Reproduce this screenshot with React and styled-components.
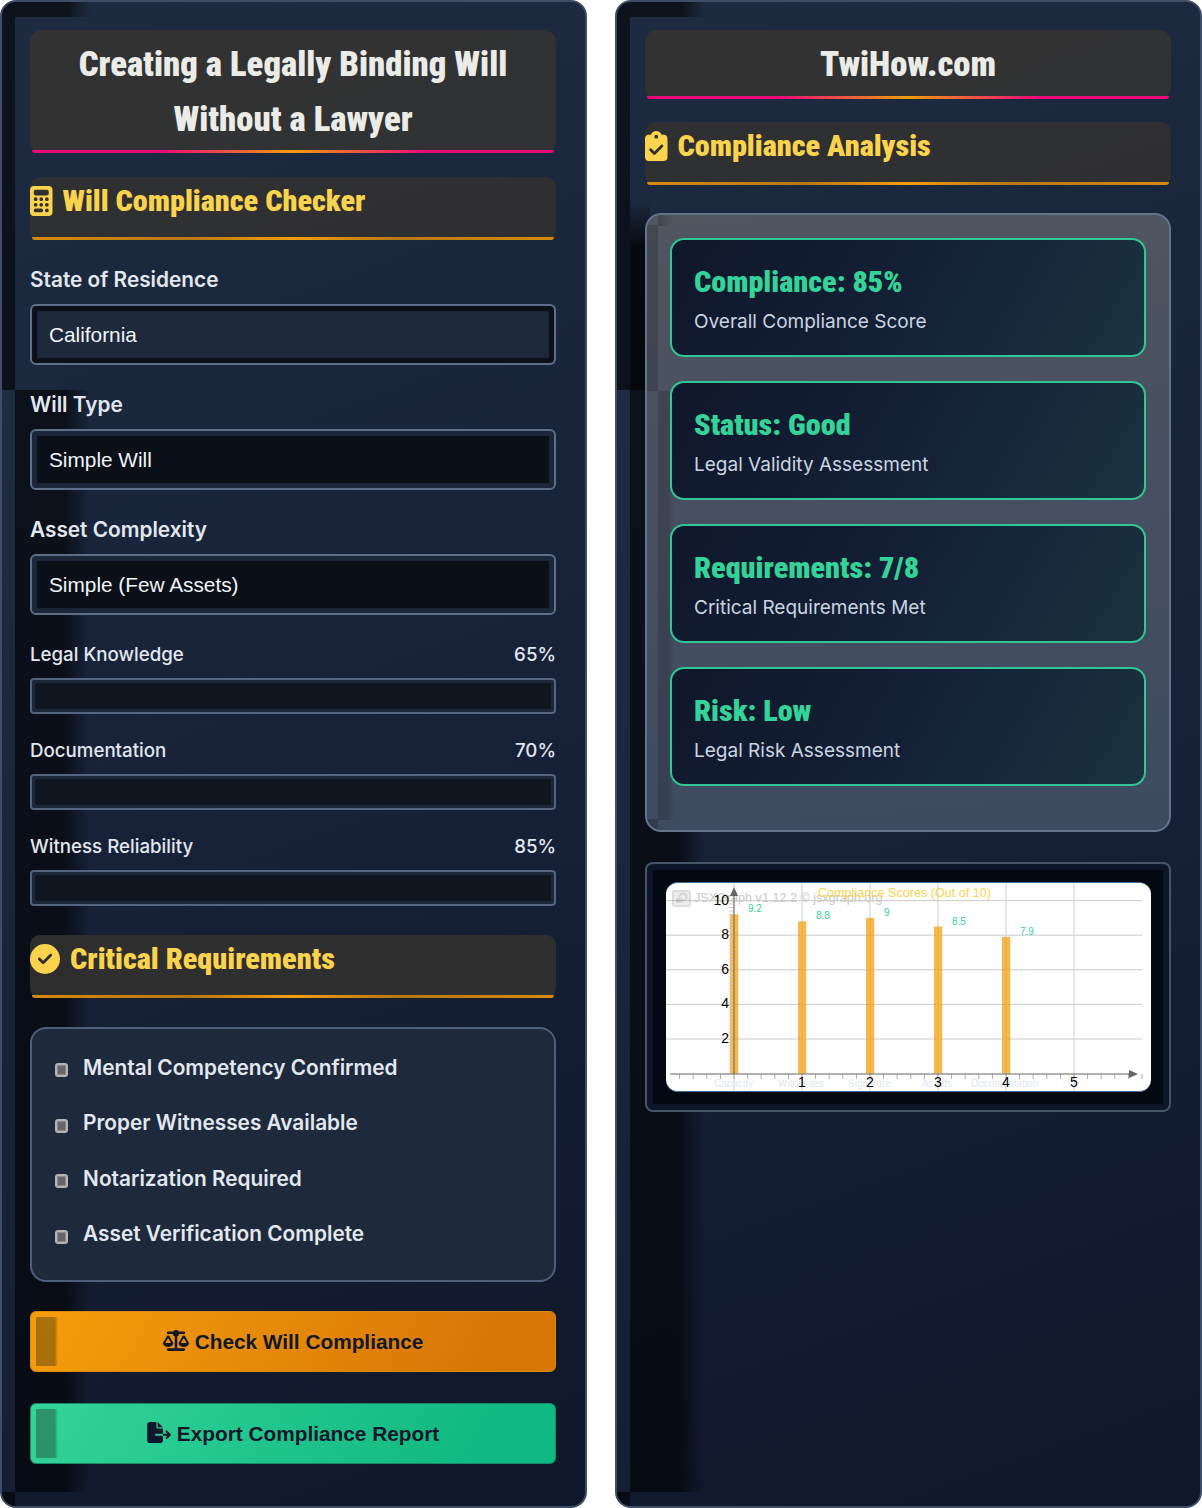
import React from "react";
import styled, { createGlobalStyle } from "styled-components";
import { FaCalculator, FaClipboardCheck, FaCircleCheck, FaScaleBalanced, FaFileExport } from "react-icons/fa6";

const Global = createGlobalStyle`
  html, body { margin: 0; padding: 0; background: #fff; }
  * { box-sizing: border-box; }
  body { font-family: Inter, "Liberation Sans", sans-serif; }
`;

const Page = styled.div`
  display: grid;
  grid-template-columns: 587px 587px;
  column-gap: 28px;
  width: 1202px;
  height: 1508px;
`;

const Panel = styled.section`
  position: relative;
  overflow: hidden;
  height: 1508px;
  padding: 28px 29px 28px 28px;
  border: 2px solid #3f4d66;
  border-radius: 16px;
  background: linear-gradient(160deg, #1e2b40 0%, #18233a 45%, #0f172a 100%);
`;

const Shade = styled.div`
  position: absolute;
  left: ${(p) => p.$l}px;
  top: ${(p) => p.$t}px;
  width: ${(p) => p.$w}px;
  height: ${(p) => p.$h}px;
  background: ${(p) => p.$bg};
  pointer-events: none;
`;

const Content = styled.div`
  position: relative;
  display: flex;
  flex-direction: column;
`;

const Title = styled.h1`
  position: relative;
  margin: 0 0 ${(p) => p.$mb}px;
  padding: 7px 0;
  border-radius: 12px;
  background: rgba(51, 51, 51, 0.97);
  color: #ebebe8;
  font-family: Roboto, sans-serif;
  font-stretch: 75%;
  font-size: 34.7px;
  font-weight: 900;
  line-height: 54.6px;
  text-align: center;
  &::after {
    content: "";
    position: absolute;
    left: 2px;
    right: 2px;
    bottom: 0;
    height: 3px;
    border-radius: 0 0 8px 8px;
    background: linear-gradient(90deg, #ec0a78 0%, #ec0a78 25%, #f59e0b 50%, #ec0a78 75%, #ec0a78 100%);
  }
`;

const SectionHead = styled.h2`
  position: relative;
  display: flex;
  align-items: center;
  gap: 10px;
  height: 63px;
  margin: 0 0 ${(p) => p.$mb}px;
  padding: 0 0 14px;
  border-radius: 10px;
  background: rgba(50, 49, 48, 0.9);
  color: #fcd34d;
  font-family: Roboto, sans-serif;
  font-stretch: 75%;
  font-size: 30.2px;
  font-weight: 900;
  line-height: 50px;
  svg { flex: none; width: ${(p) => p.$iconW}px; height: 30px; }
  &::after {
    content: "";
    position: absolute;
    left: 2px;
    right: 2px;
    bottom: 0;
    height: 3px;
    border-radius: 0 0 8px 8px;
    background: linear-gradient(90deg, #d98a0b 0%, #b9770f 30%, #f59e0b 50%, #b9770f 70%, #d98a0b 100%);
  }
`;

const Label = styled.label`
  display: block;
  height: 30px;
  margin-bottom: 9px;
  color: #e2e8f0;
  font-size: 20.8px;
  font-weight: 600;
  line-height: 30px;
`;

const SelectBox = styled.div`
  display: flex;
  align-items: center;
  height: 61px;
  margin-bottom: 25px;
  padding: 1px 0 0 17px;
  border: 2px solid #5f6f8a;
  border-radius: 6px;
  background: ${(p) => (p.$open ? "#1e293b" : "#0a0f18")};
  box-shadow: inset 0 0 1px 5px ${(p) => (p.$open ? "#0b1019" : "#1c273a")};
  color: #f1f5f9;
  font-family: "Liberation Sans", Arial, sans-serif;
  font-size: 20.8px;
`;

const SliderHead = styled.div`
  display: flex;
  justify-content: space-between;
  height: 30px;
  margin-bottom: 8px;
  color: #e2e8f0;
  font-size: 18.7px;
  font-weight: 500;
  line-height: 30px;
`;

const Track = styled.div`
  height: 36px;
  margin-bottom: ${(p) => p.$mb}px;
  border: 2px solid #56657f;
  border-radius: 4px;
  background: #10151f;
  box-shadow: inset 0 0 1px 3px #1c273a;
`;

const Checklist = styled.ul`
  height: 255px;
  margin: 0 0 29px;
  padding: 11px 0 0 22.6px;
  border: 2px solid #4f5f7a;
  border-radius: 16px;
  background: #1e293b;
  list-style: none;
`;

const CheckItem = styled.li`
  display: flex;
  align-items: center;
  height: 55.4px;
  color: #e2e8f0;
  font-size: 20.8px;
  font-weight: 600;
`;

const Bullet = styled.span`
  flex: none;
  width: 13px;
  height: 14px;
  margin: 6px 15.5px 0 0;
  border: 2px solid #b4b4b4;
  border-radius: 3px;
  background: #666;
  box-shadow: inset 0 0 0 1px #8a8a8a;
`;

const ActionButton = styled.button`
  position: relative;
  display: flex;
  align-items: center;
  justify-content: center;
  gap: 6px;
  width: 100%;
  height: 61px;
  margin: 0 0 ${(p) => p.$mb}px;
  padding: 2px 0 0;
  border: 1px solid ${(p) => (p.$green ? "#148a66" : "#d9890b")};
  border-radius: 6px;
  background: linear-gradient(120deg, ${(p) => (p.$green ? "#34d399, #10b981 85%" : "#f59e0b, #d97706 85%")});
  color: #0f172a;
  font-family: "Liberation Sans", Arial, sans-serif;
  font-size: 20.8px;
  font-weight: 700;
  svg { width: ${(p) => p.$iconW}px; height: 21px; margin-top: -3px; }
  &::before {
    content: "";
    position: absolute;
    left: 5px;
    top: 5px;
    bottom: 5px;
    width: 22px;
    background: linear-gradient(90deg, rgba(30, 30, 20, 0.35) 85%, rgba(30, 30, 20, 0));
  }
`;

const AnalysisBox = styled.div`
  position: relative;
  overflow: hidden;
  height: 618.6px;
  margin-bottom: 30px;
  padding: 23px 23px 22px;
  border: 2px solid #64748b;
  border-radius: 16px;
  background: linear-gradient(175deg, #505660 0%, #48505f 40%, #3d4a60 100%);
`;

const ResultCard = styled.article`
  position: relative;
  height: 119px;
  margin-bottom: 24px;
  padding: 22px 22px;
  border: 2px solid #2fc795;
  border-radius: 14px;
  background: linear-gradient(120deg, #0f172a 0%, #142036 50%, #1b3340 100%);
`;

const ResultTitle = styled.h3`
  margin: 0 0 5px;
  color: #34d399;
  font-family: Roboto, sans-serif;
  font-stretch: 75%;
  font-size: 30.2px;
  font-weight: 900;
  line-height: 40px;
`;

const ResultNote = styled.p`
  margin: 0;
  color: #cbd5e1;
  font-size: 19px;
  line-height: 30px;
`;

const ChartBox = styled.div`
  height: 250px;
  padding: 18px 19px;
  border: 2px solid #475569;
  border-radius: 8px;
  background: #040812;
  box-shadow: inset 0 0 1px 6px #0e1729;
`;

const ChartFrame = styled.div`
  width: 485px;
  height: 210px;
  overflow: hidden;
  border-radius: 12px;
  border-top: 1px solid #3b6f9f;
  border-bottom: 1px solid #3b6f9f;
  background: #fff;
  svg { display: block; }
`;

const sx = (v) => 68 + 68 * v;
const sy = (v) => 190.6 - 17.3 * v;
const bars = [
  { x: 0, v: 9.2, l: "9.2", c: "Capacity", cx: 48 },
  { x: 1, v: 8.8, l: "8.8", c: "Witnesses", cx: 112 },
  { x: 2, v: 9, l: "9", c: "Signature", cx: 182 },
  { x: 3, v: 8.5, l: "8.5", c: "Assets", cx: 256 },
  { x: 4, v: 7.9, l: "7.9", c: "Documentation", cx: 305 },
];

function Chart() {
  const font = '"Liberation Sans", Arial, sans-serif';
  const minorX = [];
  for (let i = -4; i < 34; i++) minorX.push(sx(i / 5) + 0);
  const minorY = [];
  for (let i = 1; i < 50; i++) minorY.push(sy(i / 5));
  return (
    <svg width="485" height="208" viewBox="0 0 485 208" fontFamily={font}>
      {[2, 4, 6, 8, 10].map((n) => (
        <line key={n} x1="0" x2="476" y1={sy(n)} y2={sy(n)} stroke="#cacaca" strokeWidth="1" />
      ))}
      {[0, 1, 2, 3, 4, 5].map((n) => (
        <line key={n} x1={sx(n)} x2={sx(n)} y1="0" y2="208" stroke="#d6d6d6" strokeWidth="1.2" />
      ))}
      <g opacity="0.25">
        <rect x="7" y="8" width="17" height="15" rx="2" fill="#bbb" stroke="#777" strokeWidth="2" />
        <circle cx="17" cy="14" r="3.5" fill="none" stroke="#555" strokeWidth="2" />
        <rect x="10" y="15" width="6" height="5" fill="#555" />
      </g>
      <text x="28" y="18.5" fontSize="12.6" fill="#c9c9c9">JSXGraph v1.12.2 © jsxgraph.org</text>
      {bars.map((b) => (
        <g key={b.x}>
          <rect x={sx(b.x) - 4} y={sy(b.v)} width="9" height={190.6 - sy(b.v)} fill="#f59e0b" opacity="0.22" />
          <rect x={sx(b.x) - 4} y={sy(b.v)} width="8" height={190.6 - sy(b.v)} fill="#f59e0b" opacity="0.65" />
          <text x={sx(b.x) + 14} y={sy(b.v) - 2} fontSize="10" fill="#34d399">{b.l}</text>
        </g>
      ))}
      {minorX.map((x) => (
        <line key={x} x1={x} x2={x} y1="191" y2="196" stroke="#aaa" strokeWidth="1" />
      ))}
      {minorY.map((y) => (
        <line key={y} x1={sx(0) - 5} x2={sx(0)} y1={y} y2={y} stroke="#d9c9a8" strokeWidth="1" />
      ))}
      <line x1="4" x2="470" y1="191" y2="191" stroke="#666" strokeWidth="1" />
      <line x1={sx(0)} x2={sx(0)} y1="10" y2="191" stroke="#666" strokeWidth="1" />
      <polygon points="463,187 472,191 463,195" fill="#666" />
      <polygon points={`${sx(0)},4 ${sx(0) - 4},13 ${sx(0) + 4},13`} fill="#666" />
      {[2, 4, 6, 8, 10].map((n) => (
        <text key={n} x={sx(0) - 5} y={sy(n) + 4} fontSize="14" textAnchor="end" fill="#000">{n}</text>
      ))}
      {bars.map((b) => (
        <text key={b.c} x={b.cx} y="204" fontSize="10" fill="#e2e8f0">{b.c}</text>
      ))}
      {[1, 2, 3, 4, 5].map((n) => (
        <text key={n} x={sx(n)} y="204" fontSize="14" textAnchor="middle" fill="#000">{n}</text>
      ))}
      <text x="152" y="14" fontSize="12.6" fill="#fcd34d">Compliance Scores (Out of 10)</text>
    </svg>
  );
}

const Shades = ({ right }) => (
  <>
    <Shade $l={0} $t={0} $w={13} $h={388} $bg="rgba(0,0,0,.55)" />
    <Shade $l={13} $t={0} $w={75} $h={15} $bg="linear-gradient(90deg, rgba(0,0,0,.55) 70%, rgba(0,0,0,0))" />
    <Shade $l={13} $t={388} $w={75} $h={1102} $bg="linear-gradient(90deg, rgba(0,0,0,.58) 0%, rgba(0,0,0,.58) 65%, rgba(0,0,0,0) 100%)" />
    <Shade $l={0} $t={388} $w={13} $h={1102} $bg="rgba(255,255,255,.02)" />
    <Shade $l={0} $t={1490} $w={13} $h={16} $bg="rgba(0,0,0,.55)" />
    {right && (
      <Shade $l={13} $t={200} $w={20} $h={188} $bg="linear-gradient(180deg, rgba(0,0,0,0), rgba(0,0,0,.8) 25%)" />
    )}
  </>
);

const selects = [
  ["State of Residence", "California", true],
  ["Will Type", "Simple Will", false],
  ["Asset Complexity", "Simple (Few Assets)", false],
];
const sliders = [
  ["Legal Knowledge", "65%"],
  ["Documentation", "70%"],
  ["Witness Reliability", "85%"],
];
const checks = ["Mental Competency Confirmed", "Proper Witnesses Available", "Notarization Required", "Asset Verification Complete"];
const results = [
  ["Compliance: 85%", "Overall Compliance Score"],
  ["Status: Good", "Legal Validity Assessment"],
  ["Requirements: 7/8", "Critical Requirements Met"],
  ["Risk: Low", "Legal Risk Assessment"],
];

export default function App() {
  return (
    <>
      <Global />
      <Page>
        <Panel>
          <Shades />
          <Content>
            <Title $mb={23.6}>Creating a Legally Binding Will<br />Without a Lawyer</Title>
            <SectionHead $mb={25} $iconW={22.5}><FaCalculator />Will Compliance Checker</SectionHead>
            {selects.map(([l, v, open]) => (
              <div key={l}>
                <Label>{l}</Label>
                <SelectBox $open={open}>{v}</SelectBox>
              </div>
            ))}
            {sliders.map(([l, v], i) => (
              <div key={l}>
                <SliderHead><span>{l}</span><span>{v}</span></SliderHead>
                <Track $mb={i === 2 ? 29 : 22} />
              </div>
            ))}
            <SectionHead $mb={29} $iconW={30}><FaCircleCheck />Critical Requirements</SectionHead>
            <Checklist>
              {checks.map((c) => (
                <CheckItem key={c}><Bullet />{c}</CheckItem>
              ))}
            </Checklist>
            <ActionButton $mb={31} $iconW={26}><FaScaleBalanced />Check Will Compliance</ActionButton>
            <ActionButton $green $mb={0} $iconW={24}><FaFileExport />Export Compliance Report</ActionButton>
          </Content>
        </Panel>
        <Panel>
          <Shades right />
          <Content>
            <Title $mb={23}>TwiHow.com</Title>
            <SectionHead $mb={28.6} $iconW={22.5}><FaClipboardCheck />Compliance Analysis</SectionHead>
            <AnalysisBox>
              <Shade $l={0} $t={10} $w={11} $h={166} $bg="rgba(0,0,0,.16)" />
              <Shade $l={11} $t={0} $w={14} $h={11} $bg="linear-gradient(90deg, rgba(0,0,0,.2), rgba(0,0,0,0))" />
              <Shade $l={11} $t={176} $w={16} $h={429} $bg="linear-gradient(90deg, rgba(0,0,0,.16) 60%, rgba(0,0,0,0))" />
              <Shade $l={0} $t={604} $w={11} $h={12} $bg="rgba(0,0,0,.18)" />
              {results.map(([t, n]) => (
                <ResultCard key={t}>
                  <ResultTitle>{t}</ResultTitle>
                  <ResultNote>{n}</ResultNote>
                </ResultCard>
              ))}
            </AnalysisBox>
            <ChartBox>
              <ChartFrame><Chart /></ChartFrame>
            </ChartBox>
          </Content>
        </Panel>
      </Page>
    </>
  );
}
